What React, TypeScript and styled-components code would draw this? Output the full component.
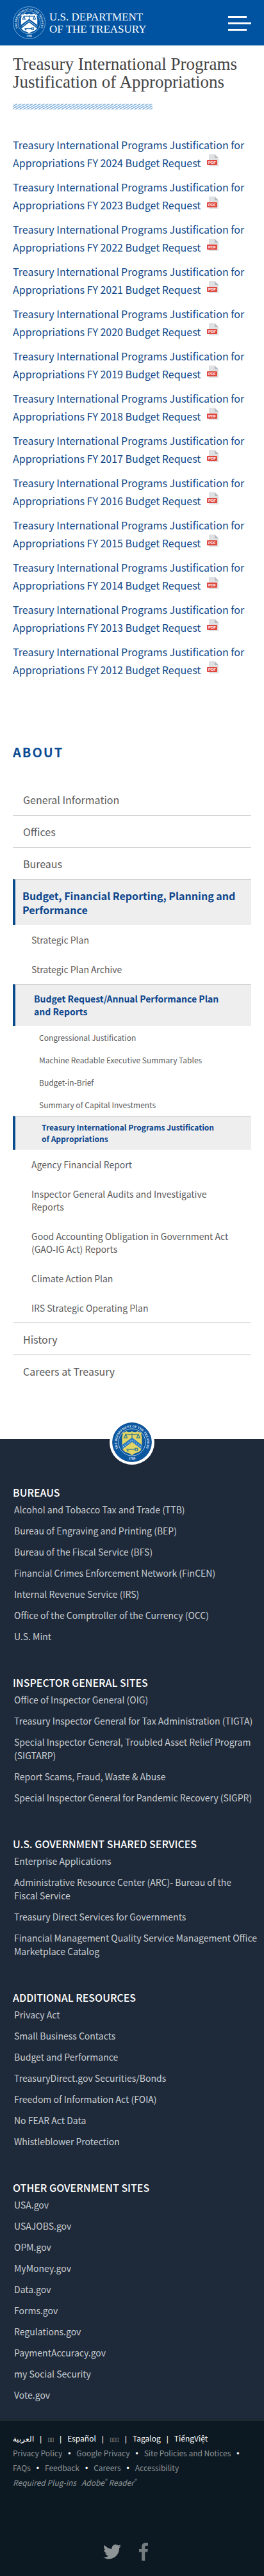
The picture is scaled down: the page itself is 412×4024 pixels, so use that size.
import React from "react";
import styled, { createGlobalStyle, css } from "styled-components";

const sans = `"Noto Sans CJK SC", "Noto Sans", sans-serif`;
const serif = `"Liberation Serif", serif`;

const GlobalStyle = createGlobalStyle`
  *, *::before, *::after { box-sizing: border-box; }
  body { margin: 0; background: #fff; font-family: ${sans}; color: #444; }
  h1, h2, h3, p, ul { margin: 0; padding: 0; }
  ul { list-style: none; }
  a { color: inherit; text-decoration: none; }
`;

const TopBar = styled.header`
  display: flex;
  align-items: center;
  justify-content: space-between;
  height: 71px;
  padding: 0 20px;
  background: #0053a1;
`;

const Brand = styled.a`
  display: flex;
  align-items: center;
  gap: 6px;
  color: #fff;
  font: 17px/19px ${serif};
`;

const BrandName = styled.span`
  display: flex;
  flex-direction: column;
`;

const MenuButton = styled.button`
  display: flex;
  flex-direction: column;
  gap: 7px;
  width: 36px;
  margin-top: 2px;
  padding: 0;
  border: 0;
  background: none;
`;

const MenuBar = styled.span<{ $short?: boolean }>`
  width: ${(p) => (p.$short ? "29px" : "36px")};
  height: 3px;
  background: #fff;
`;

const Article = styled.main`
  padding: 15px 20px 0;
`;

const Title = styled.h1`
  font: 400 27px/28px ${serif};
  color: #444;
`;

const Hatch = styled.div`
  width: 218px;
  height: 9px;
  margin: 20px 0 41px;
  background: repeating-linear-gradient(
    150deg,
    #86b4dd 0,
    #86b4dd 1px,
    #fff 2px,
    #fff 3px
  );
`;

const Documents = styled.ul`
  display: flex;
  flex-direction: column;
  gap: 10px;
  font-size: 16px;
  line-height: 28px;
  color: #11498a;
`;

const PdfGlyph = styled.svg`
  width: 18px;
  height: 20px;
  margin-left: 10px;
`;

const SideNav = styled.nav`
  padding: 101px 20px 0;
`;

const NavTitle = styled.h2`
  margin-bottom: 34px;
  font-size: 20px;
  line-height: 28px;
  letter-spacing: 2px;
  color: #0a4a93;
`;

const levels = {
  1: css`
    padding: 14px 12px 13px 16px;
    border-top: 1px solid #bbb;
    font-size: 16px;
    line-height: 22px;
  `,
  2: css`
    padding: 13px 24px 13px 29px;
    font-size: 14px;
    line-height: 20px;
  `,
  3: css`
    padding: 9px 44px 8px 41px;
    font-size: 12px;
    line-height: 18px;
  `,
};

const activeLevels = {
  1: css`
    padding-left: 11px;
  `,
  2: css`
    padding-top: 12px;
    padding-left: 29px;
  `,
  3: css`
    padding-top: 8px;
    padding-left: 41px;
  `,
};

type Level = 1 | 2 | 3;

const NavLink = styled.a<{ $level: Level; $active?: boolean }>`
  display: block;
  color: #5b5b5b;
  ${(p) => levels[p.$level]}
  ${(p) =>
    p.$active &&
    css`
      border-top: 1px solid #c4c4c4;
      border-left: 4px solid #0b4a8c;
      background: #eee;
      color: #0b458c;
      font-weight: 700;
      ${activeLevels[p.$level]}
    `}
`;

const NavItem = styled.li``;

const NavList = styled.ul<{ $level: Level }>`
  ${(p) =>
    p.$level === 1 &&
    css`
      & > ${NavItem}:first-child > ${NavLink} {
        border-top-color: transparent;
      }
    `}
`;

const SiteFooter = styled.footer`
  margin-top: 82px;
  background: #1e2939;
  color: #c9ced3;
`;

const SealBadge = styled.div`
  display: flex;
  justify-content: center;
  height: 40px;
`;

const SealDisc = styled.div`
  position: relative;
  top: -30px;
  width: 70px;
  height: 70px;
  padding: 4px;
  border-radius: 50%;
  background: #fff;
`;

const LinkGroups = styled.div`
  display: flex;
  flex-direction: column;
  gap: 50px;
  padding: 32px 4px 26px 20px;
  border-bottom: 4px solid #1c2a34;
`;

const GroupTitle = styled.h3`
  margin-bottom: 5px;
  font-size: 16px;
  font-weight: 500;
  line-height: 23px;
  text-transform: uppercase;
  color: #fff;
`;

const GroupList = styled.ul`
  display: flex;
  flex-direction: column;
  gap: 12px;
  padding-left: 2px;
  font-size: 14px;
  line-height: 21px;
`;

const Legal = styled.div`
  padding: 16px 20px 28px;
  background: #0d1922;
  color: #8c9397;
  font-size: 12px;
  line-height: 22px;
`;

const InlineList = styled.ul<{ $bright?: boolean }>`
  display: flex;
  flex-wrap: wrap;
  margin-right: -12px;
  color: ${(p) => (p.$bright ? "#fff" : "inherit")};

  li:not(:last-child)::after {
    content: "${(p) => (p.$bright ? "|" : "•")}";
    margin: 0 9px;
    color: #fff;
    font-family: "Liberation Sans", sans-serif;
  }
`;

const Boxes = styled.span`
  font: 9px "DejaVu Sans", sans-serif;
  color: #aaa;
`;

const Plugins = styled.p`
  display: flex;
  gap: 8px;
  font-style: italic;

  sup {
    font-size: 8px;
    line-height: 8px;
  }
`;

const Social = styled.div`
  display: flex;
  justify-content: center;
  gap: 28px;
  margin-top: 83px;
  padding-right: 21px;
`;

const SocialLink = styled.a`
  display: flex;
  align-items: center;
  height: 28px;
`;

const Seal = ({ size, mono }: { size: number; mono?: boolean }) => {
  const id = mono ? "ring-mono" : "ring-color";
  const field = mono ? "#0053a1" : "#0b57a0";
  const shield = mono ? "#fff" : "#e3d465";
  const mark = mono ? "#0053a1" : "#3a7d8c";
  return (
    <svg width={size} height={size} viewBox="0 0 100 100" role="img" aria-label="Treasury seal">
      <defs>
        <path id={id} d="M23 77 A38 38 0 1 1 77 77" />
        <path id={`${id}-year`} d="M32 90 A44 44 0 0 0 68 90" />
      </defs>
      <circle cx="50" cy="50" r="49" fill={field} stroke={mono ? "#9cc3e6" : "#0b4a8c"} strokeWidth="1.5" />
      <circle cx="50" cy="50" r="34" fill="none" stroke="#cfe3f4" strokeWidth="1.3" />
      <text fontFamily="Liberation Serif" fontSize="8" fontWeight="700" fill="#e4f0fa">
        <textPath href={`#${id}`} startOffset="50%" textAnchor="middle">
          THE DEPARTMENT OF THE TREASURY
        </textPath>
      </text>
      <text fontFamily="Liberation Serif" fontSize="9" fontWeight="700" fill="#e4f0fa">
        <textPath href={`#${id}-year`} startOffset="50%" textAnchor="middle">
          1789
        </textPath>
      </text>
      <path
        d="M26 25 Q32 26 36 22 Q43 27 50 22 Q57 27 64 22 Q68 26 74 25 Q72 31 75 38 V60 Q75 74 60 77 Q53 79 50 83 Q47 79 40 77 Q25 74 25 60 V38 Q28 31 26 25Z"
        fill={shield}
      />
      <path d="M50 27 V40 M34 30 H66 M34 30 L30 39 H38 Z M66 30 L62 39 H70 Z" fill="none" stroke={mark} strokeWidth="2" />
      <path d="M25 57 L50 38 L75 57 V68 L50 49 L25 68Z" fill={mono ? field : "#2b7cc4"} />
      <path d="M27 62 L50 44 L73 62" fill="none" stroke="#fff" strokeWidth="1.6" strokeDasharray={mono ? undefined : "3 3"} />
      <path d="M36 68 H60 M58 65 h6 v6 h-6z M38 68 v4 h4" fill="none" stroke={mark} strokeWidth="2" />
    </svg>
  );
};

const PdfIcon = () => (
  <PdfGlyph viewBox="0 0 18 20" role="img" aria-label="PDF">
    <path d="M3 0 H12 L18 6 V19 H3Z" fill="#dfe0e2" />
    <path d="M12 0 L18 6 H12Z" fill="#b5bac0" />
    <rect x="0" y="9" width="16" height="8" rx="1" fill="#e0483f" />
    <text x="8" y="15" textAnchor="middle" fontFamily="Liberation Sans" fontWeight="700" fontSize="6" fill="#fff">
      PDF
    </text>
  </PdfGlyph>
);

const years = [2024, 2023, 2022, 2021, 2020, 2019, 2018, 2017, 2016, 2015, 2014, 2013, 2012];

interface Node {
  label: string;
  active?: boolean;
  children?: Node[];
}

const about: Node[] = [
  { label: "General Information" },
  { label: "Offices" },
  { label: "Bureaus" },
  {
    label: "Budget, Financial Reporting, Planning and Performance",
    active: true,
    children: [
      { label: "Strategic Plan" },
      { label: "Strategic Plan Archive" },
      {
        label: "Budget Request/Annual Performance Plan and Reports",
        active: true,
        children: [
          { label: "Congressional Justification" },
          { label: "Machine Readable Executive Summary Tables" },
          { label: "Budget-in-Brief" },
          { label: "Summary of Capital Investments" },
          { label: "Treasury International Programs Justification of Appropriations", active: true },
        ],
      },
      { label: "Agency Financial Report" },
      { label: "Inspector General Audits and Investigative Reports" },
      { label: "Good Accounting Obligation in Government Act (GAO-IG Act) Reports" },
      { label: "Climate Action Plan" },
      { label: "IRS Strategic Operating Plan" },
    ],
  },
  { label: "History" },
  { label: "Careers at Treasury" },
];

const groups = [
  {
    title: "Bureaus",
    links: [
      "Alcohol and Tobacco Tax and Trade (TTB)",
      "Bureau of Engraving and Printing (BEP)",
      "Bureau of the Fiscal Service (BFS)",
      "Financial Crimes Enforcement Network (FinCEN)",
      "Internal Revenue Service (IRS)",
      "Office of the Comptroller of the Currency (OCC)",
      "U.S. Mint",
    ],
  },
  {
    title: "Inspector General Sites",
    links: [
      "Office of Inspector General (OIG)",
      "Treasury Inspector General for Tax Administration (TIGTA)",
      "Special Inspector General, Troubled Asset Relief Program (SIGTARP)",
      "Report Scams, Fraud, Waste & Abuse",
      "Special Inspector General for Pandemic Recovery (SIGPR)",
    ],
  },
  {
    title: "U.S. Government Shared Services",
    links: [
      "Enterprise Applications",
      "Administrative Resource Center (ARC)- Bureau of the Fiscal\u00a0Service",
      "Treasury Direct Services for Governments",
      "Financial Management Quality Service Management Office Marketplace Catalog",
    ],
  },
  {
    title: "Additional Resources",
    links: [
      "Privacy Act",
      "Small Business Contacts",
      "Budget and Performance",
      "TreasuryDirect.gov Securities/Bonds",
      "Freedom of Information Act (FOIA)",
      "No FEAR Act Data",
      "Whistleblower Protection",
    ],
  },
  {
    title: "Other Government Sites",
    links: [
      "USA.gov",
      "USAJOBS.gov",
      "OPM.gov",
      "MyMoney.gov",
      "Data.gov",
      "Forms.gov",
      "Regulations.gov",
      "PaymentAccuracy.gov",
      "my Social Security",
      "Vote.gov",
    ],
  },
];

const policies = [
  "Privacy Policy",
  "Google Privacy",
  "Site Policies and Notices",
  "FAQs",
  "Feedback",
  "Careers",
  "Accessibility",
];

const NavTree = ({ nodes, level }: { nodes: Node[]; level: Level }) => (
  <NavList $level={level}>
    {nodes.map((node) => (
      <NavItem key={node.label}>
        <NavLink href="#" $level={level} $active={node.active}>
          {node.label}
        </NavLink>
        {node.children && <NavTree nodes={node.children} level={(level + 1) as Level} />}
      </NavItem>
    ))}
  </NavList>
);

export default function App() {
  return (
    <>
      <GlobalStyle />
      <TopBar>
        <Brand href="#">
          <Seal size={51} mono />
          <BrandName>
            <span>U.S. DEPARTMENT</span>
            <span>OF THE TREASURY</span>
          </BrandName>
        </Brand>
        <MenuButton aria-label="Menu">
          <MenuBar $short />
          <MenuBar />
          <MenuBar $short />
        </MenuButton>
      </TopBar>

      <Article>
        <Title>Treasury International Programs Justification of Appropriations</Title>
        <Hatch />
        <Documents>
          {years.map((year) => (
            <li key={year}>
              <a href="#">
                {`Treasury International Programs Justification for Appropriations FY ${year} Budget Request`}
                <PdfIcon />
              </a>
            </li>
          ))}
        </Documents>
      </Article>

      <SideNav aria-label="About">
        <NavTitle>ABOUT</NavTitle>
        <NavTree nodes={about} level={1} />
      </SideNav>

      <SiteFooter>
        <SealBadge>
          <SealDisc>
            <Seal size={62} />
          </SealDisc>
        </SealBadge>
        <LinkGroups>
          {groups.map((group) => (
            <section key={group.title}>
              <GroupTitle>{group.title}</GroupTitle>
              <GroupList>
                {group.links.map((link) => (
                  <li key={link}>
                    <a href="#">{link}</a>
                  </li>
                ))}
              </GroupList>
            </section>
          ))}
        </LinkGroups>
        <Legal>
          <InlineList $bright>
            <li><a href="#" lang="ar">العربية</a></li>
            <li><a href="#" aria-label="Chinese"><Boxes>▯▯</Boxes></a></li>
            <li><a href="#" lang="es">Español</a></li>
            <li><a href="#" aria-label="Korean"><Boxes>▯▯▯</Boxes></a></li>
            <li><a href="#" lang="tl">Tagalog</a></li>
            <li><a href="#" lang="vi">TiếngViệt</a></li>
          </InlineList>
          <InlineList>
            {policies.map((policy) => (
              <li key={policy}>
                <a href="#">{policy}</a>
              </li>
            ))}
          </InlineList>
          <Plugins>
            <span>Required Plug-ins</span>
            <a href="#">Adobe<sup>®</sup> Reader<sup>®</sup></a>
          </Plugins>
          <Social>
            <SocialLink href="#" aria-label="Twitter">
              <svg width="28" height="24" viewBox="0 48 512 416" fill="#8f9496">
                <path d="M459 152c.3 4.500.3 9 .3 13.600C459.300 304 353.700 464 160.900 464 101.400 464 46.100 446.800 0 417c8.400 1 16.600 1.300 25.300 1.300 49 0 94.200-16.600 130.300-44.800-46.100-1-84.800-31.200-98.100-72.800 6.500 1 13 1.600 19.800 1.600 9.400 0 18.800-1.300 27.600-3.600-48-9.700-84.100-52-84.100-103v-1.300c14 7.800 30.200 12.700 47.400 13.300-28.300-18.800-46.800-51-46.800-87.400 0-19.500 5.200-37.400 14.300-53 51.700 63.700 129.300 105.300 216.400 109.800-1.600-7.800-2.600-15.900-2.600-24C249.500 95.100 296.300 48 354.400 48c30.200 0 57.500 12.700 76.700 33.100 23.700-4.500 46.500-13.300 66.600-25.300-7.800 24.400-24.400 44.800-46.100 57.800 21.100-2.300 41.600-8.100 60.400-16.200-14.300 20.800-32.200 39.300-52.600 54.300z" />
              </svg>
            </SocialLink>
            <SocialLink href="#" aria-label="Facebook">
              <svg width="14" height="28" viewBox="0 0 14 28" fill="#757d81">
                <path d="M14 0.300V4.800H11.500C9.500 4.800 9.200 5.700 9.200 7V10H13.800L13.200 14.600H9.200V28H4.200V14.600H0V10H4.200V6.400C4.200 2.300 6.600 0 10.400 0 12.100 0 13.600 .1 14 .3Z" />
              </svg>
            </SocialLink>
          </Social>
        </Legal>
      </SiteFooter>
    </>
  );
}
